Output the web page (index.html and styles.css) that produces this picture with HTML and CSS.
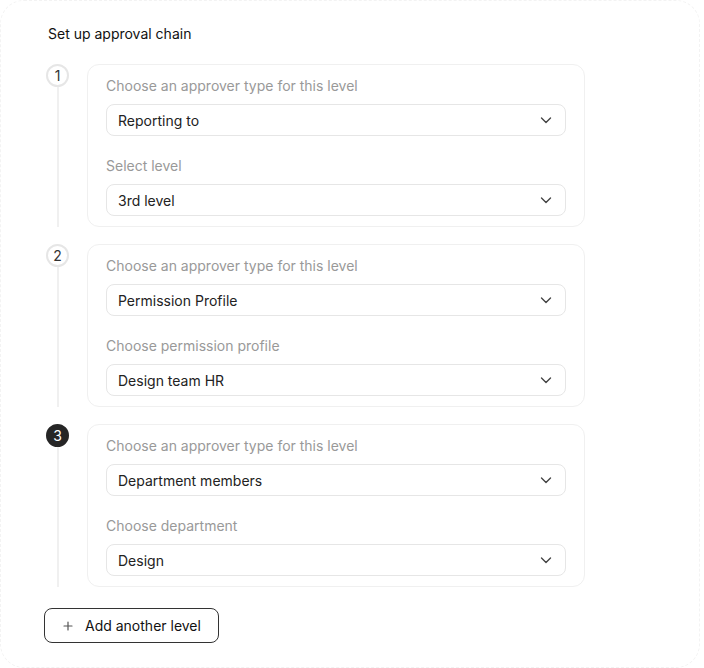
FILE: index.html
```html
<!DOCTYPE html>
<html lang="en">
<head>
<meta charset="utf-8">
<title>Set up approval chain</title>
<link rel="stylesheet" href="styles.css">
</head>
<body>
<div class="panel">
  <h2 class="title">Set up approval chain</h2>
  <div class="steps">
    <div class="step">
      <div class="rail"><span class="num">1</span><span class="line"></span></div>
      <div class="card">
        <div class="label">Choose an approver type for this level</div>
        <div class="select"><span>Reporting to</span><svg class="chev" viewBox="0 0 16 16" width="16" height="16"><path d="M3.5 6 L8 10.5 L12.5 6" fill="none" stroke="#444" stroke-width="1.4" stroke-linecap="round" stroke-linejoin="round"/></svg></div>
        <div class="label">Select level</div>
        <div class="select"><span>3rd level</span><svg class="chev" viewBox="0 0 16 16" width="16" height="16"><path d="M3.5 6 L8 10.5 L12.5 6" fill="none" stroke="#444" stroke-width="1.4" stroke-linecap="round" stroke-linejoin="round"/></svg></div>
      </div>
    </div>
    <div class="step">
      <div class="rail"><span class="num">2</span><span class="line"></span></div>
      <div class="card">
        <div class="label">Choose an approver type for this level</div>
        <div class="select"><span>Permission Profile</span><svg class="chev" viewBox="0 0 16 16" width="16" height="16"><path d="M3.5 6 L8 10.5 L12.5 6" fill="none" stroke="#444" stroke-width="1.4" stroke-linecap="round" stroke-linejoin="round"/></svg></div>
        <div class="label">Choose permission profile</div>
        <div class="select"><span>Design team HR</span><svg class="chev" viewBox="0 0 16 16" width="16" height="16"><path d="M3.5 6 L8 10.5 L12.5 6" fill="none" stroke="#444" stroke-width="1.4" stroke-linecap="round" stroke-linejoin="round"/></svg></div>
      </div>
    </div>
    <div class="step last">
      <div class="rail"><span class="num active">3</span><span class="line"></span></div>
      <div class="card">
        <div class="label">Choose an approver type for this level</div>
        <div class="select"><span>Department members</span><svg class="chev" viewBox="0 0 16 16" width="16" height="16"><path d="M3.5 6 L8 10.5 L12.5 6" fill="none" stroke="#444" stroke-width="1.4" stroke-linecap="round" stroke-linejoin="round"/></svg></div>
        <div class="label">Choose department</div>
        <div class="select"><span>Design</span><svg class="chev" viewBox="0 0 16 16" width="16" height="16"><path d="M3.5 6 L8 10.5 L12.5 6" fill="none" stroke="#444" stroke-width="1.4" stroke-linecap="round" stroke-linejoin="round"/></svg></div>
      </div>
    </div>
  </div>
  <button class="add" type="button"><svg viewBox="0 0 12 12" width="12" height="12"><path d="M6 2 V10 M2 6 H10" stroke="#555" stroke-width="1.2" stroke-linecap="round"/></svg><span>Add another level</span></button>
</div>
</body>
</html>
```
FILE: styles.css
```css
* { box-sizing: border-box; }
html, body { margin: 0; padding: 0; background: #fff; }
body {
  font-family: Inter, "Noto Sans", "Liberation Sans", sans-serif;
  font-size: 14px;
  color: #222;
  overflow: hidden;
}
.panel {
  width: 700px;
  height: 668px;
  border: 1px dashed #f3f3f3;
  border-radius: 24px;
  padding: 23px 0 0 45px;
}
.title {
  margin: 0 0 20px 2px;
  font-size: 14px;
  line-height: 20px;
  font-weight: 400;
  color: #111;
}
.steps { display: flex; flex-direction: column; }
.step {
  display: flex;
  gap: 18px;
  padding-bottom: 17px;
}
.step.last { padding-bottom: 0; }
.rail {
  width: 23px;
  display: flex;
  flex-direction: column;
  align-items: center;
}
.num {
  width: 23px;
  height: 23px;
  flex: none;
  border-radius: 50%;
  border: 2px solid #e6e6e6;
  display: flex;
  align-items: center;
  justify-content: center;
  font-size: 14px;
  line-height: 1;
  color: #333;
  background: #fff;
}
.num.active {
  background: #262626;
  border-color: #262626;
  color: #fff;
}
.line {
  flex: 1;
  width: 2px;
  background: #f0f0f0;
}
.card {
  width: 498px;
  border: 1px solid #f0f0f0;
  border-radius: 12px;
  padding: 11px 18px 10px;
  display: flex;
  flex-direction: column;
}
.label {
  line-height: 20px;
  color: #999;
  margin-bottom: 8px;
}
.select {
  height: 32px;
  border: 1px solid #e6e6e6;
  border-radius: 8px;
  padding: 0 11px;
  display: flex;
  align-items: center;
  justify-content: space-between;
  color: #222;
  margin-bottom: 20px;
}
.select:last-child { margin-bottom: 0; }
.chev { display: block; }
.add {
  margin: 21px 0 0 -2px;
  height: 35px;
  width: 175px;
  border: 1px solid #333;
  border-radius: 8px;
  background: #fff;
  padding: 0 0 0 17px;
  display: flex;
  align-items: center;
  gap: 11px;
  font-family: inherit;
  font-size: 14px;
  font-weight: 400;
  color: #111;
  cursor: pointer;
}
.add svg { display: block; }
```
